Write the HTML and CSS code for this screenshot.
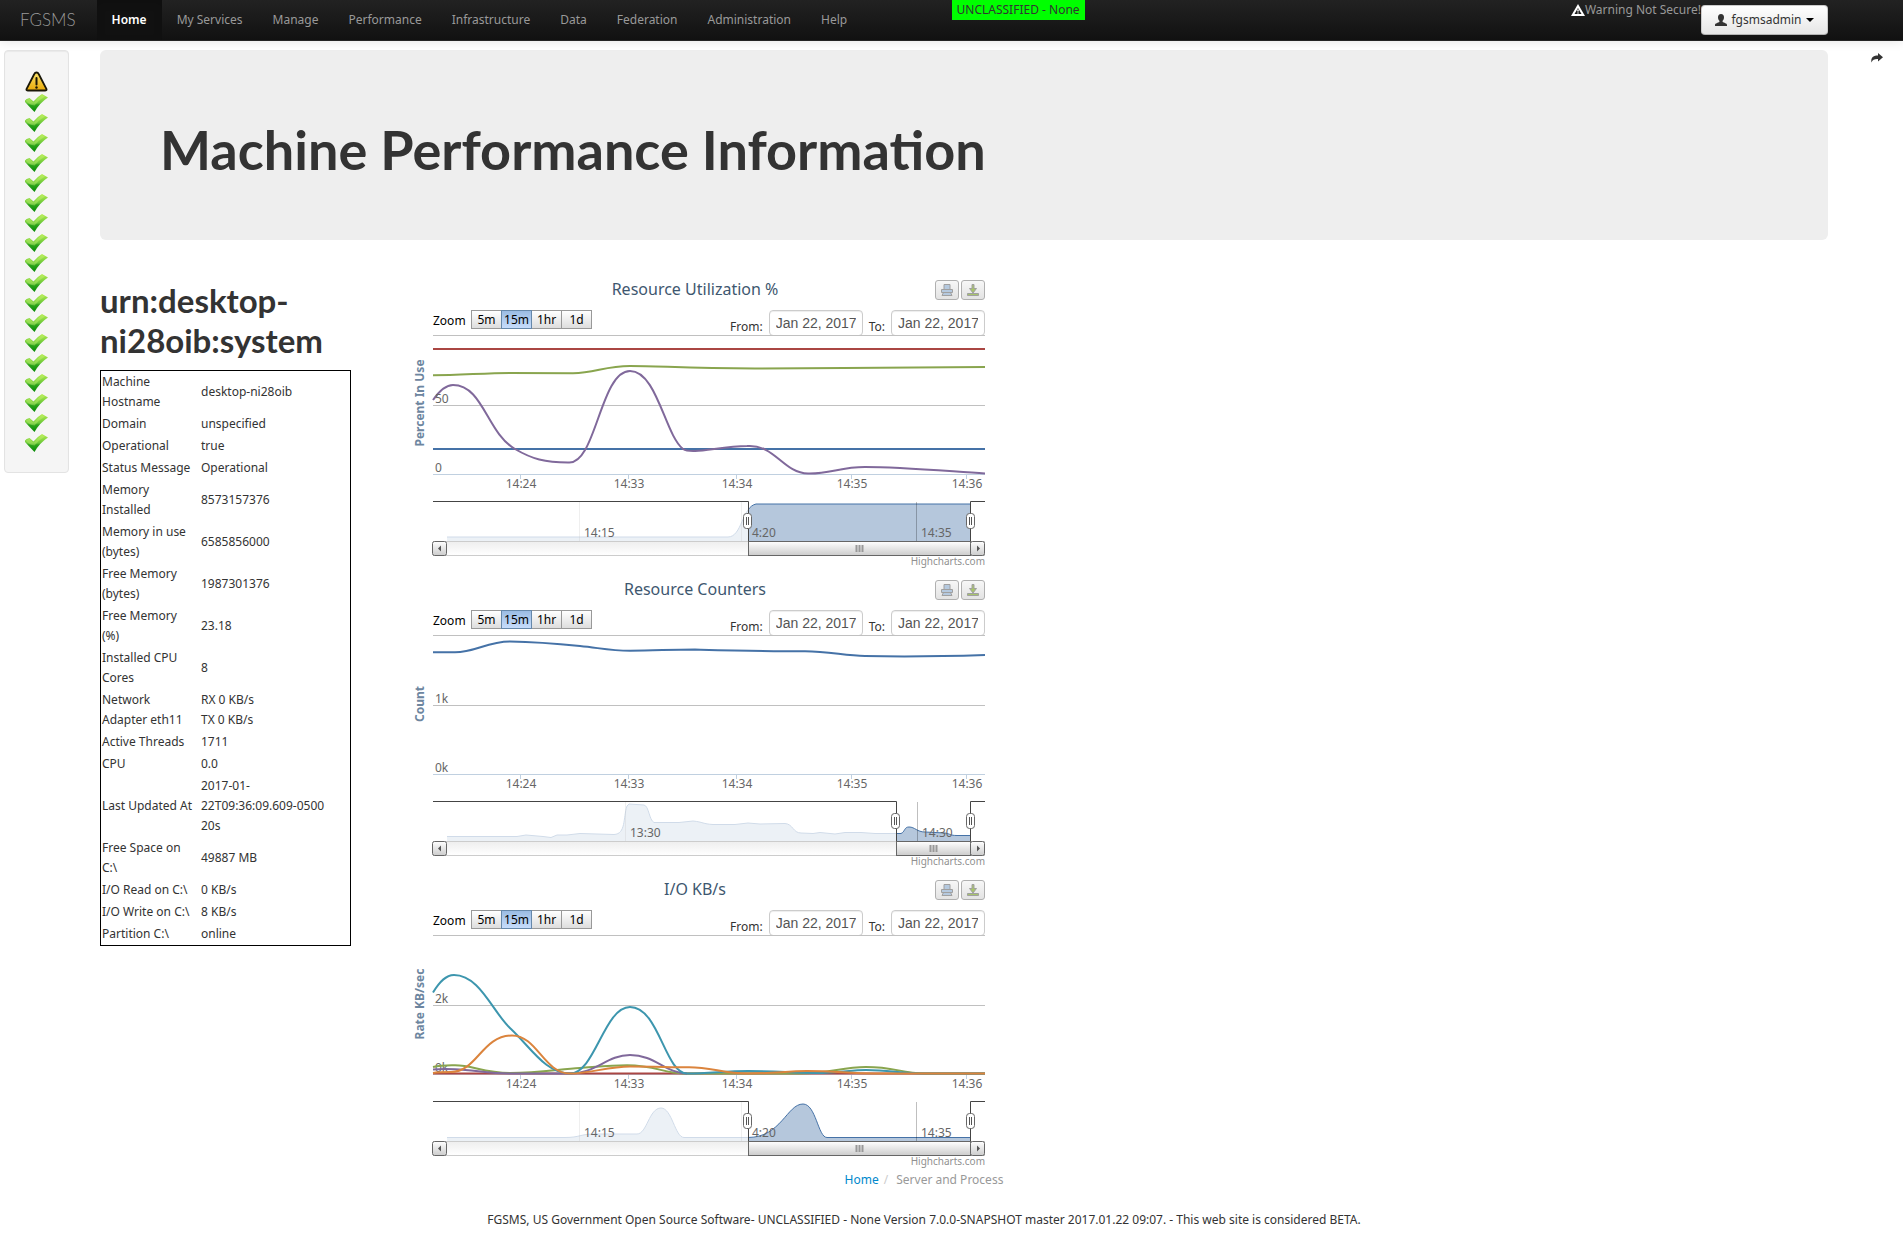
FILE: index.html
```
<!DOCTYPE html>
<html lang="en">
<head>
<meta charset="utf-8">
<title>FGSMS - Machine Performance Information</title>
<link rel="stylesheet" href="styles.css">
</head>
<body>
<svg class="defs" width="0" height="0" aria-hidden="true">
  <defs>
    <linearGradient id="g-check" x1="0" y1="0" x2="0" y2="1"><stop offset="0" stop-color="#b4ec4e"/><stop offset=".5" stop-color="#6cc83a"/><stop offset=".6" stop-color="#2fa51c"/><stop offset="1" stop-color="#078a08"/></linearGradient>
    <linearGradient id="g-warn" x1="0" y1="0" x2="0" y2="1"><stop offset="0" stop-color="#fbe36a"/><stop offset="1" stop-color="#e8a908"/></linearGradient>
    <linearGradient id="g-track" x1="0" y1="0" x2="0" y2="1"><stop offset="0" stop-color="#eee"/><stop offset="1" stop-color="#fff"/></linearGradient>
    <linearGradient id="g-thumb" x1="0" y1="0" x2="0" y2="1"><stop offset="0" stop-color="#fff"/><stop offset="1" stop-color="#ccc"/></linearGradient>
    <symbol id="check" viewBox="0 0 23 18"><path d="M0 6.500 Q1 4.500 4.500 4 L8.500 7.500 Q12 3 17 0 L23 3.500 Q14.500 9 9.500 18 Q5 13.500 0 8Z" fill="url(#g-check)"/><path d="M1 6.500 Q3 4.500 5 5 L8.500 8.500 Q13 3.500 17 1 L20 2.500 Q14 6 9.500 11.500 Q4 11 1 7Z" fill="#c9f57a" opacity=".4"/></symbol>
    <symbol id="warn" viewBox="0 0 23 21"><path d="M11.500 1.500 Q13 1.500 13.700 3 L21.500 18 Q22 19.500 20 19.500 H3 Q1 19.500 1.500 18 L9.300 3 Q10 1.500 11.500 1.500Z" fill="url(#g-warn)" stroke="#1a1708" stroke-width="1.800"/><path d="M11.500 7 V13.500" stroke="#1a1708" stroke-width="2" stroke-linecap="round"/><circle cx="11.500" cy="16.500" r="1.200" fill="#1a1708"/></symbol>
    <symbol id="print" viewBox="0 0 14 14"><path d="M4 1.500 H10 V6.500 H4Z M1.500 6.500 H12.500 V9.500 H1.500Z M3.500 9.500 H10.500 L12 12.500 H2Z" fill="#b5c9df" stroke="#a0a0a0"/></symbol>
    <symbol id="download" viewBox="0 0 14 14"><path d="M6 1.500 H8 V5.500 H10.500 L7 10 L3.500 5.500 H6Z M1.500 10.500 H12.500 V12.500 H1.500Z" fill="#a8c46c" stroke="#a0a0a0"/></symbol>
    <symbol id="handle" viewBox="0 0 9 16"><rect x=".5" y=".5" width="8" height="15" rx="3" fill="#fff" stroke="#666"/><path d="M3.500 4 V12 M5.500 4 V12" stroke="#555"/></symbol>
    <symbol id="arrow-l" viewBox="0 0 15 15"><rect x=".5" y=".5" width="14" height="14" rx="2" fill="url(#g-thumb)" stroke="#666"/><path d="M9 4.500 V10.500 L6 7.500Z" fill="#555"/></symbol>
    <symbol id="arrow-r" viewBox="0 0 15 15"><rect x=".5" y=".5" width="14" height="14" rx="2" fill="url(#g-thumb)" stroke="#666"/><path d="M7 4.500 V10.500 L10 7.500Z" fill="#555"/></symbol>
  </defs>
</svg>

<header class="navbar">
  <a class="brand" href="#">FGSMS</a>
  <nav class="menu">
    <a class="active" href="#">Home</a>
    <a href="#">My Services</a>
    <a href="#">Manage</a>
    <a href="#">Performance</a>
    <a href="#">Infrastructure</a>
    <a href="#">Data</a>
    <a href="#">Federation</a>
    <a href="#">Administration</a>
    <a href="#">Help</a>
  </nav>
  <div class="classification">UNCLASSIFIED - None</div>
  <div class="account">
    <span class="insecure"><svg width="14" height="12" viewBox="0 0 14 12"><path d="M7 0 L14 12 H0Z" fill="#fff"/><path d="M7 4 L10.500 10 H3.500Z" fill="#1c1c1c"/><path d="M7 5.500 V7.500 M7 8.500 V9.500" stroke="#fff" stroke-width="1.500"/></svg>Warning Not Secure!</span>
    <button class="user" type="button"><svg width="12" height="12" viewBox="0 0 12 12"><path d="M6 0 C8 0 9 1.300 9 3.200 C9 5 8.300 6 7.600 6.800 V8 C9 9 12 9 12 11 V12 H0 V11 C0 9 3 9 4.400 8 V6.800 C3.700 6 3 5 3 3.200 C3 1.300 4 0 6 0Z" fill="#333"/></svg>fgsmsadmin<span class="caret"></span></button>
  </div>
</header>

<aside class="status">
  <svg class="warn"><use href="#warn"/></svg>
  <svg><use href="#check"/></svg>
  <svg><use href="#check"/></svg>
  <svg><use href="#check"/></svg>
  <svg><use href="#check"/></svg>
  <svg><use href="#check"/></svg>
  <svg><use href="#check"/></svg>
  <svg><use href="#check"/></svg>
  <svg><use href="#check"/></svg>
  <svg><use href="#check"/></svg>
  <svg><use href="#check"/></svg>
  <svg><use href="#check"/></svg>
  <svg><use href="#check"/></svg>
  <svg><use href="#check"/></svg>
  <svg><use href="#check"/></svg>
  <svg><use href="#check"/></svg>
  <svg><use href="#check"/></svg>
  <svg><use href="#check"/></svg>
  <svg><use href="#check"/></svg>
</aside>
<a class="share" href="#" aria-label="Share"><svg width="12" height="10" viewBox="0 0 12 10"><path d="M7 0 L12 4.300 L7 8.500 V6 C4 5.800 1.500 6.500 .5 9.500 C-.5 5 2 2.500 7 2.500Z" fill="#333"/></svg></a>

<div class="page">
  <main>
    <div class="hero"><h1>Machine Performance Information</h1></div>
    <div class="columns">
      <section class="machine">
        <h2>urn:desktop-ni28oib:system</h2>
        <table>
          <tr><th scope="row">Machine Hostname</th><td>desktop-ni28oib</td></tr>
          <tr><th scope="row">Domain</th><td>unspecified</td></tr>
          <tr><th scope="row">Operational</th><td>true</td></tr>
          <tr><th scope="row">Status Message</th><td>Operational</td></tr>
          <tr><th scope="row">Memory Installed</th><td>8573157376</td></tr>
          <tr><th scope="row">Memory in use (bytes)</th><td>6585856000</td></tr>
          <tr><th scope="row">Free Memory (bytes)</th><td>1987301376</td></tr>
          <tr><th scope="row">Free Memory<br>(%)</th><td>23.18</td></tr>
          <tr><th scope="row">Installed CPU Cores</th><td>8</td></tr>
          <tr><th scope="row">Network<br>Adapter eth11</th><td>RX 0 KB/s<br>TX 0 KB/s</td></tr>
          <tr><th scope="row">Active Threads</th><td>1711</td></tr>
          <tr><th scope="row">CPU</th><td>0.0</td></tr>
          <tr><th scope="row">Last Updated At</th><td>2017-01-<br>22T09:36:09.609-0500<br>20s</td></tr>
          <tr><th scope="row">Free Space on<br>C:\</th><td>49887 MB</td></tr>
          <tr><th scope="row">I/O Read on C:\</th><td>0 KB/s</td></tr>
          <tr><th scope="row">I/O Write on C:\</th><td>8 KB/s</td></tr>
          <tr><th scope="row">Partition C:\</th><td>online</td></tr>
        </table>
      </section>

      <section class="charts">
        <article class="chart">
          <div class="chart-head">
            <h3>Resource Utilization %</h3>
            <div class="tools"><button type="button" aria-label="Print"><svg><use href="#print"/></svg></button><button type="button" aria-label="Download"><svg><use href="#download"/></svg></button></div>
          </div>
          <div class="range">
            <span class="zoom">Zoom</span>
            <div class="steps"><button type="button">5m</button><button type="button" class="on">15m</button><button type="button">1hr</button><button type="button">1d</button></div>
            <label for="from1">From:</label><input id="from1" type="text" value="Jan 22, 2017">
            <label for="to1">To:</label><input id="to1" type="text" value="Jan 22, 2017">
          </div>
          <svg class="plot" viewBox="0 65 600 235" width="600" height="235">
            <path class="grid" d="M38 65.500 H590 M38 135.500 H590"/>
            <path class="axis" d="M38 204.500 H590 M125.500 205 V209 M233.500 205 V209 M341.500 205 V209 M456.500 205 V209 M571.500 205 V209"/>
            <text class="title" transform="translate(29 133) rotate(-90)">Percent In Use</text>
            <g class="series">
              <path stroke="#4572a7" d="M38 179 H590"/>
              <path stroke="#aa4643" d="M38 79 H590"/>
              <path stroke="#89a54e" d="M38 105.300 C65 105.300 90 103 115 103 C140 103 165 103.300 178 103.300 C200 103 210 96 235 96 C265 96 290 98.300 360 98.500 C440 98.500 500 97 590 97"/>
              <path stroke="#80699b" d="M38 130 C45 120 51 115 58 115 C88 115 92 163 120 179 C137 189 150 192.500 173 192.500 C201 196 205 101 235 101 C262 101 270 165 288 179 C297 185 325 176 352 176 C380 174 388 203 413 203.500 C435 204 445 197 470 197 C505 197 550 201 590 203.500"/>
            </g>
            <g class="label"><text x="40" y="133">50</text><text x="40" y="202">0</text></g>
            <g class="label mid"><text x="126" y="218">14:24</text><text x="234" y="218">14:33</text><text x="342" y="218">14:34</text><text x="457" y="218">14:35</text><text x="572" y="218">14:36</text></g>
            <path class="area" d="M52 267 H333 C347 267 347 237 361 234 H575 V271 H52Z"/>
            <path class="area-line" d="M52 267 H333 C347 267 347 237 361 234 H575"/>
            <path class="nav-grid" d="M184.500 232 V271 M346.500 232 V271 M521.500 232 V271"/>
            <path class="mask" d="M38 232 H353 V271 H38Z M576 232 H590 V271 H576Z"/>
            <g class="label"><text x="189" y="267">14:15</text><text x="357" y="267">4:20</text><text x="526" y="267">14:35</text></g>
            <rect class="track" x="38.500" y="271.500" width="551" height="14"/>
            <path class="outline" d="M38 231.500 H353.500 V272 M575.500 272 V231.500 H590"/>
            <rect class="thumb" x="353.500" y="271.500" width="222" height="14"/>
            <path class="grip" d="M461.500 275 V282 M464.500 275 V282 M467.500 275 V282"/>
            <use href="#arrow-l" x="37" y="271" width="15" height="15"/><use href="#arrow-r" x="575" y="271" width="15" height="15"/>
            <use href="#handle" x="348" y="243" width="9" height="16"/><use href="#handle" x="571" y="243" width="9" height="16"/>
            <text class="credit" x="590" y="295">Highcharts.com</text>
          </svg>
        </article>

        <article class="chart">
          <div class="chart-head">
            <h3>Resource Counters</h3>
            <div class="tools"><button type="button" aria-label="Print"><svg><use href="#print"/></svg></button><button type="button" aria-label="Download"><svg><use href="#download"/></svg></button></div>
          </div>
          <div class="range">
            <span class="zoom">Zoom</span>
            <div class="steps"><button type="button">5m</button><button type="button" class="on">15m</button><button type="button">1hr</button><button type="button">1d</button></div>
            <label for="from2">From:</label><input id="from2" type="text" value="Jan 22, 2017">
            <label for="to2">To:</label><input id="to2" type="text" value="Jan 22, 2017">
          </div>
          <svg class="plot" viewBox="0 65 600 235" width="600" height="235">
            <path class="grid" d="M38 65.500 H590 M38 135.500 H590"/>
            <path class="axis" d="M38 204.500 H590 M125.500 205 V209 M233.500 205 V209 M341.500 205 V209 M456.500 205 V209 M571.500 205 V209"/>
            <text class="title" transform="translate(29 134) rotate(-90)">Count</text>
            <g class="series">
              <path stroke="#4572a7" d="M38 82.300 H60 C80 82.300 92 71.500 115 71.500 C145 72 170 74.500 185 76 C205 78 215 80.700 235 80.700 C260 80.700 275 79.500 300 79.500 C340 80.500 370 81.300 410 81.300 C435 81.300 450 86 470 86 C510 87 560 86 590 85"/>
            </g>
            <g class="label"><text x="40" y="133">1k</text><text x="40" y="202">0k</text></g>
            <g class="label mid"><text x="126" y="218">14:24</text><text x="234" y="218">14:33</text><text x="342" y="218">14:34</text><text x="457" y="218">14:35</text><text x="572" y="218">14:36</text></g>
            <path class="area" d="M52 266.500 H122 L131 265 L148 266.500 L156 267.500 L162 265 L172 265 L185 263.500 L219 264.500 C231 264 228 248 232 236 L234 234 L249 235 C254 236 254 250 259 252.500 H284 L298 251 C308 252 308 254 318 254.500 H340 L353 253 L365 254 L390 253.500 C398 254 398 263 406 263 L418 263.500 L425 262.500 L440 264 L450 262.500 L466 262.500 L480 263.500 L506 263.500 C510 262 509 257 514 257 C520 257 522 262 530 262 L550 263 C556 264 555 265.500 562 265.500 H575 V271 H52Z"/>
            <path class="area-line" d="M52 266.500 H122 L131 265 L148 266.500 L156 267.500 L162 265 L172 265 L185 263.500 L219 264.500 C231 264 228 248 232 236 L234 234 L249 235 C254 236 254 250 259 252.500 H284 L298 251 C308 252 308 254 318 254.500 H340 L353 253 L365 254 L390 253.500 C398 254 398 263 406 263 L418 263.500 L425 262.500 L440 264 L450 262.500 L466 262.500 L480 263.500 L506 263.500 C510 262 509 257 514 257 C520 257 522 262 530 262 L550 263 C556 264 555 265.500 562 265.500 H575"/>
            <path class="nav-grid" d="M230.500 232 V271 M522.500 232 V271"/>
            <path class="mask" d="M38 232 H501 V271 H38Z M576 232 H590 V271 H576Z"/>
            <g class="label"><text x="235" y="267">13:30</text><text x="527" y="267">14:30</text></g>
            <rect class="track" x="38.500" y="271.500" width="551" height="14"/>
            <path class="outline" d="M38 231.500 H501.500 V272 M575.500 272 V231.500 H590"/>
            <rect class="thumb" x="501.500" y="271.500" width="74" height="14"/>
            <path class="grip" d="M535.500 275 V282 M538.500 275 V282 M541.500 275 V282"/>
            <use href="#arrow-l" x="37" y="271" width="15" height="15"/><use href="#arrow-r" x="575" y="271" width="15" height="15"/>
            <use href="#handle" x="496" y="243" width="9" height="16"/><use href="#handle" x="571" y="243" width="9" height="16"/>
            <text class="credit" x="590" y="295">Highcharts.com</text>
          </svg>
        </article>

        <article class="chart">
          <div class="chart-head">
            <h3>I/O KB/s</h3>
            <div class="tools"><button type="button" aria-label="Print"><svg><use href="#print"/></svg></button><button type="button" aria-label="Download"><svg><use href="#download"/></svg></button></div>
          </div>
          <div class="range">
            <span class="zoom">Zoom</span>
            <div class="steps"><button type="button">5m</button><button type="button" class="on">15m</button><button type="button">1hr</button><button type="button">1d</button></div>
            <label for="from3">From:</label><input id="from3" type="text" value="Jan 22, 2017">
            <label for="to3">To:</label><input id="to3" type="text" value="Jan 22, 2017">
          </div>
          <svg class="plot" viewBox="0 65 600 235" width="600" height="235">
            <path class="grid" d="M38 65.500 H590 M38 135.500 H590"/>
            <path class="axis" d="M38 204.500 H590 M125.500 205 V209 M233.500 205 V209 M341.500 205 V209 M456.500 205 V209 M571.500 205 V209"/>
            <text class="title" transform="translate(29 134) rotate(-90)">Rate KB/sec</text>
            <g class="label"><text x="40" y="133">2k</text><text x="40" y="202">0k</text></g>
            <g class="series">
              <path stroke="#aa4643" d="M38 203.500 H590"/>
              <path stroke="#89a54e" d="M38 197 C46 195 54 195.300 60 195.300 C78 195.300 88 203 115 203 C145 203 165 199 185 198 C200 197 215 195.300 232 195.300 C260 195.300 268 203 288 203.500 H400 C435 204 445 197 471 197 C500 197 505 203 530 203.500 H590"/>
              <path stroke="#80699b" d="M38 199.500 C45 199 53 199 60 199.300 C80 200 92 203.500 115 203.500 H175 C200 204 212 185 235 185 C260 185 270 203 292 203.500"/>
              <path stroke="#3d96ae" d="M38 122.500 C45 111 51 105 59 105 C85 105 98 143 116 159 C137 179 151 203.500 175 203.500 C200 203.500 209 137 235 137 C264 137 270 203.500 292 203.500 C315 203.500 330 201 353 201 C385 201 395 203 420 203 C445 203 455 200 471 200 C495 200 505 203.500 530 203.500 H590"/>
              <path stroke="#db843d" d="M38 203 C43 202 50 202 56 202 C82 202 87 165.500 117 165.500 C142 165.500 149 203.500 175 203.500 C195 203.500 213 196.500 235 196.500 C260 196.500 275 197.300 294 197.300 C317 197.300 328 203.500 353 203.500 C378 203.500 392 201 412 201 C440 201 455 203.500 480 203.500 H590"/>
            </g>
            <g class="label mid"><text x="126" y="218">14:24</text><text x="234" y="218">14:33</text><text x="342" y="218">14:34</text><text x="457" y="218">14:35</text><text x="572" y="218">14:36</text></g>
            <path class="area" d="M52 267.500 H170 C185 267.500 185 264 200 264 H242 C252 264 254 238 266 238 C277 238 280 267.500 289 267.500 H353 C386 267.500 392 234 408 234 C421 234 423 267.500 432 267.500 H575 V271 H52Z"/>
            <path class="area-line" d="M52 267.500 H170 C185 267.500 185 264 200 264 H242 C252 264 254 238 266 238 C277 238 280 267.500 289 267.500 H353 C386 267.500 392 234 408 234 C421 234 423 267.500 432 267.500 H575"/>
            <path class="nav-grid" d="M184.500 232 V271 M346.500 232 V271 M521.500 232 V271"/>
            <path class="mask" d="M38 232 H353 V271 H38Z M576 232 H590 V271 H576Z"/>
            <g class="label"><text x="189" y="267">14:15</text><text x="357" y="267">4:20</text><text x="526" y="267">14:35</text></g>
            <rect class="track" x="38.500" y="271.500" width="551" height="14"/>
            <path class="outline" d="M38 231.500 H353.500 V272 M575.500 272 V231.500 H590"/>
            <rect class="thumb" x="353.500" y="271.500" width="222" height="14"/>
            <path class="grip" d="M461.500 275 V282 M464.500 275 V282 M467.500 275 V282"/>
            <use href="#arrow-l" x="37" y="271" width="15" height="15"/><use href="#arrow-r" x="575" y="271" width="15" height="15"/>
            <use href="#handle" x="348" y="243" width="9" height="16"/><use href="#handle" x="571" y="243" width="9" height="16"/>
            <text class="credit" x="590" y="295">Highcharts.com</text>
          </svg>
        </article>
      </section>
    </div>
  </main>
  <nav class="breadcrumb"><a href="#">Home</a><span class="slash">/</span><span>Server and Process</span></nav>
  <footer>FGSMS, US Government Open Source Software- UNCLASSIFIED - None Version 7.0.0-SNAPSHOT master 2017.01.22 09:07. - This web site is considered BETA.</footer>
</div>
</body>
</html>
```
FILE: styles.css
```
* { box-sizing: border-box; }
body {
  margin: 0;
  font: 12px/20px "Noto Sans", "Open Sans", sans-serif;
  color: #333;
  background: #fff;
}
a { color: #08c; text-decoration: none; }
button, input { font: inherit; color: inherit; }
.defs { position: absolute; }

.navbar {
  position: relative;
  display: flex;
  height: 41px;
  padding: 0 75px 0 20px;
  background: linear-gradient(#222, #111);
  border-bottom: 1px solid #252525;
  box-shadow: 0 1px 10px rgba(0, 0, 0, .1);
}
.brand {
  padding: 10px 21px 10px 0;
  font: 300 17px/20px Lato, "Noto Sans", sans-serif;
  color: #999;
}
.menu { display: flex; }
.menu a { padding: 10px 15px; color: #999; }
.menu .active {
  color: #fff;
  font-weight: 600;
  background: #111;
  box-shadow: inset 0 3px 8px rgba(0, 0, 0, .125);
}
.classification {
  position: absolute;
  top: 0;
  left: 50%;
  padding: 0 5px;
  background: #0f0;
}
.account { display: flex; align-items: flex-start; margin-left: auto; color: #999; }
.insecure { display: flex; align-items: center; }
.user {
  display: flex;
  align-items: center;
  justify-content: center;
  gap: 4px;
  width: 127px;
  height: 30px;
  margin-top: 5px;
  padding: 0;
  color: #333;
  background: linear-gradient(#fff, #e6e6e6);
  border: 1px solid #ccc;
  border-bottom-color: #b3b3b3;
  border-radius: 4px;
}
.caret { border: 4px solid transparent; border-top-color: #000; border-bottom: 0; }

.status {
  position: absolute;
  top: 50px;
  left: 4px;
  display: flex;
  flex-direction: column;
  align-items: center;
  gap: 2px;
  width: 65px;
  padding: 20px 0;
  background: #f5f5f5;
  border: 1px solid #e3e3e3;
  border-radius: 4px;
  box-shadow: inset 0 1px 1px rgba(0, 0, 0, .05);
}
.status svg { width: 23px; height: 18px; }
.status .warn { height: 21px; }
.share { position: absolute; top: 53px; right: 20px; line-height: 0; }

.page { padding: 9px 75px 10px 20px; }
main { padding-left: 80px; }
.hero { padding: 75px 60px 65px; margin-bottom: 30px; background: #eee; border-radius: 6px; }
h1, h2 { margin: 0; font-family: Lato, "Noto Sans", sans-serif; font-weight: 700; }
h1 { font-size: 54px; line-height: 50px; }
h2 { margin-bottom: 10px; font-size: 33px; line-height: 40px; }
.columns { display: flex; align-items: flex-start; gap: 44px; }
.machine { flex: 0 0 251px; padding-top: 10px; }
table { width: 100%; table-layout: fixed; border: 1px solid #000; border-spacing: 0; }
th, td { padding: 1px; font-weight: 400; text-align: left; vertical-align: middle; }
th { width: 99px; }

.charts { flex: 0 0 600px; }
.chart-head {
  display: grid;
  grid-template-columns: 1fr auto 1fr;
  height: 40px;
  padding: 10px 10px 0;
}
h3 { grid-column: 2; margin: 0; font-size: 16px; font-weight: 400; line-height: 18px; color: #3e576f; }
.tools { display: flex; justify-content: flex-end; gap: 2px; }
.tools button {
  width: 24px;
  height: 20px;
  padding: 2px 4px;
  line-height: 0;
  background: linear-gradient(#f7f7f7, #e3e3e3);
  border: 1px solid #b0b0b0;
  border-radius: 3px;
}
.tools svg { width: 14px; height: 14px; }
.range { display: flex; height: 25px; padding: 0 10px 0 38px; color: #000; }
.zoom { width: 38px; line-height: 22px; }
.steps { display: flex; height: 19px; margin-right: auto; }
.steps button {
  width: 31px;
  margin-right: -1px;
  padding: 0;
  line-height: 17px;
  background: linear-gradient(#fff, #ddd);
  border: 1px solid #999;
}
.steps .on { position: relative; background: linear-gradient(#9bbce3, #c6dcfb); border-color: #68a; }
.range label { height: 25px; padding: 7px 6px 0; color: #333; }
.range input {
  width: 94px;
  height: 26px;
  padding: 0 6px;
  font: 14px/20px "Liberation Sans", sans-serif;
  color: #555;
  background: #fff;
  border: 1px solid #ccc;
  border-radius: 4px;
  box-shadow: inset 0 1px 1px rgba(0, 0, 0, .075);
}

.plot { display: block; position: relative; fill: none; }
.grid { stroke: #c0c0c0; }
.nav-grid { stroke: rgba(0, 0, 0, .25); }
.axis { stroke: #c0d0e0; }
.series path { stroke-width: 2; }
.label { fill: #666; }
.mid { text-anchor: middle; }
.title { fill: #6d869f; font-weight: 700; text-anchor: middle; }
.area { fill: rgba(69, 114, 167, .4); }
.area-line { stroke: #4572a7; }
.mask { fill: rgba(255, 255, 255, .75); }
.track { fill: url(#g-track); stroke: #ccc; }
.thumb { fill: url(#g-thumb); stroke: #666; }
.outline { stroke: #444; }
.grip { stroke: #999; stroke-width: 2; }
.credit { fill: #909090; font-size: 10px; text-anchor: end; }

.breadcrumb { display: flex; justify-content: center; color: #999; }
.slash { padding: 0 8px 0 5px; color: #ccc; }
footer { margin-top: 20px; text-align: center; }
```
